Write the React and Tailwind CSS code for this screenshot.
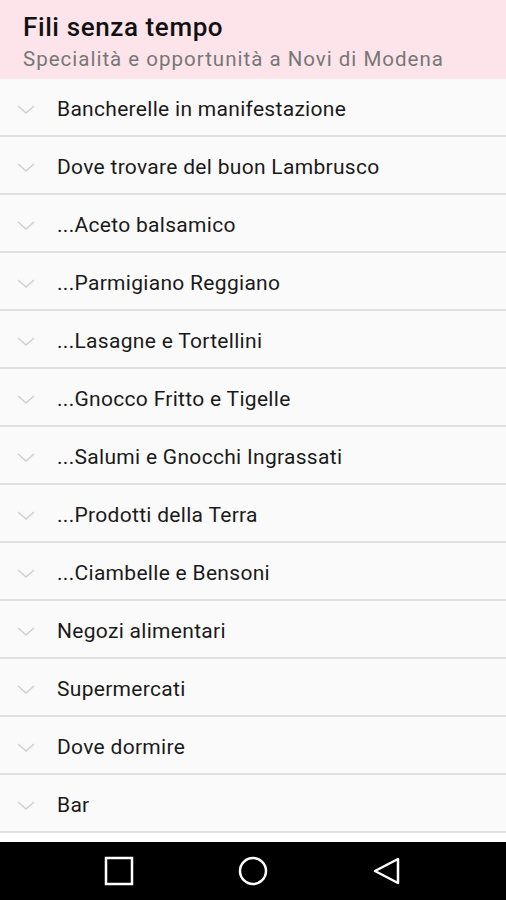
const items = [
  "Bancherelle in manifestazione",
  "Dove trovare del buon Lambrusco",
  "...Aceto balsamico",
  "...Parmigiano Reggiano",
  "...Lasagne e Tortellini",
  "...Gnocco Fritto e Tigelle",
  "...Salumi e Gnocchi Ingrassati",
  "...Prodotti della Terra",
  "...Ciambelle e Bensoni",
  "Negozi alimentari",
  "Supermercati",
  "Dove dormire",
  "Bar",
];

function Chevron() {
  return (
    <svg width="18" height="10" viewBox="0 0 18 10" className="shrink-0">
      <path d="M1 1 L9 8 L17 1" fill="none" stroke="#d0d0d0" strokeWidth="1.6" />
    </svg>
  );
}

export default function App() {
  return (
    <div
      className="w-[506px] h-[900px] flex flex-col bg-[#fafafa] overflow-hidden"
      style={{ fontFamily: "Roboto, 'Noto Sans', sans-serif" }}
    >
      {/* header */}
      <div className="h-[79px] shrink-0 bg-[#fde4ea] px-[23px] pt-[10px]">
        <h1 className="text-[26px] leading-[34px] font-medium tracking-[0.6px] text-[#111]">Fili senza tempo</h1>
        <p className="text-[20.5px] leading-[30px] tracking-[1px] text-[#777]">Specialità e opportunità a Novi di Modena</p>
      </div>

      {/* list */}
      <div className="flex-1 overflow-hidden">
        {items.map((item) => (
          <div key={item} className="h-[58px] pt-[5px] flex items-center border-b-[2px] border-[#e0e0e0]">
            <div className="w-[57px] pl-[17px] flex items-center">
              <Chevron />
            </div>
            <span className="text-[21px] tracking-[0.3px] text-[#1a1a1a]">{item}</span>
          </div>
        ))}
        <div className="h-[10px] bg-white" />
      </div>

      {/* android nav bar */}
      <div className="h-[58px] shrink-0 bg-black flex items-center justify-center gap-[104px]">
        <svg width="30" height="30" viewBox="0 0 30 30">
          <rect x="2" y="2" width="26" height="26" fill="none" stroke="#fff" strokeWidth="2.5" />
        </svg>
        <svg width="30" height="30" viewBox="0 0 30 30">
          <circle cx="15" cy="15" r="13" fill="none" stroke="#fff" strokeWidth="2.5" />
        </svg>
        <svg width="30" height="30" viewBox="0 0 30 30">
          <path d="M3 15 L26 3 L26 27 Z" fill="none" stroke="#fff" strokeWidth="2.5" strokeLinejoin="round" />
        </svg>
      </div>
    </div>
  );
}
